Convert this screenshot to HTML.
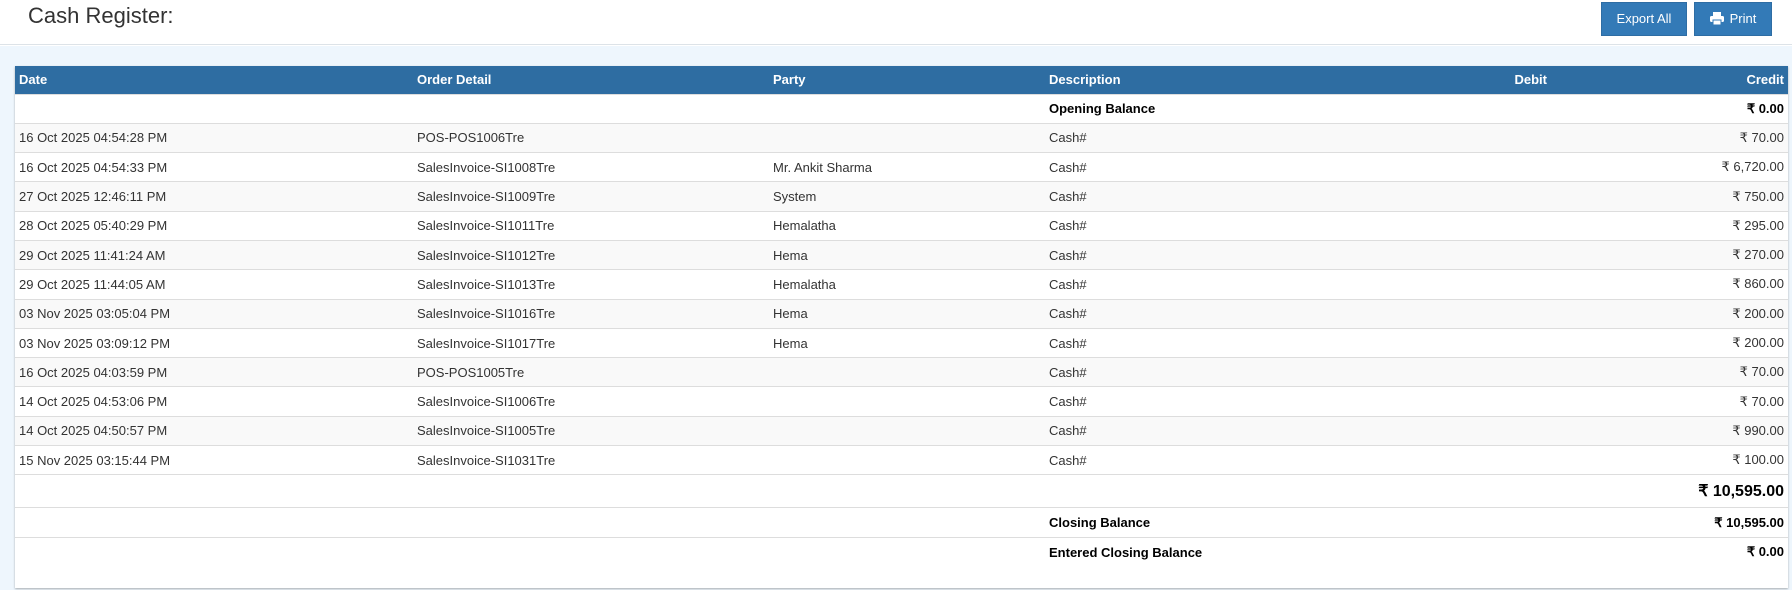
<!DOCTYPE html>
<html><head><meta charset="utf-8"><style>
*{box-sizing:border-box;margin:0;padding:0}
body{width:1792px;height:590px;background:#fff;font-family:"Liberation Sans",sans-serif;color:#333;position:relative;overflow:hidden}
.top{position:absolute;left:0;top:0;width:1792px;height:45px;background:#fff;border-bottom:1px solid #dde3e8}
.title{position:absolute;left:28px;top:2px;font-size:22px;color:#333;line-height:28px}
.btn{position:absolute;top:2px;height:34px;background:#337ab7;border:1px solid #2e6da4;color:#fff;font-size:13px;line-height:32px;text-align:center}
.bg{position:absolute;left:0;top:46px;width:1792px;height:544px;background:#eef6fd}
.card{position:absolute;left:15px;top:66px;width:1773px;height:522px;background:#fff;box-shadow:0 1px 2px rgba(0,0,0,.3)}
table{border-collapse:collapse;width:1773px;table-layout:fixed;font-size:13px}
th{background:#2e6da2;color:#fff;font-weight:bold;height:28px;text-align:left;padding:0 4px}
td{height:29.3px;padding:0 4px;border-top:1px solid #ddd;white-space:nowrap}
tr.g td{background:#f9f9f9}
.r{text-align:right}
.b{font-weight:bold;color:#000}
</style></head><body>
<div class="top"><div class="title">Cash Register:</div>
<div class="btn" style="left:1601px;width:86px">Export All</div>
<div class="btn" style="left:1694px;width:78px"><svg width="14" height="13" viewBox="0 0 14 13" style="vertical-align:-2px;margin-right:6px"><rect x="3" y="0" width="8" height="4" fill="#fff"/><rect x="0" y="4" width="14" height="6" rx="1.5" fill="#fff"/><rect x="3" y="8" width="8" height="5" fill="#fff" stroke="#337ab7" stroke-width="1"/></svg>Print</div>
</div>
<div class="bg"></div>
<div class="card">
<table>
<colgroup><col style="width:398px"><col style="width:356px"><col style="width:276px"><col style="width:254px"><col style="width:252px"><col style="width:237px"></colgroup>
<tr><th>Date</th><th>Order Detail</th><th>Party</th><th>Description</th><th class="r">Debit</th><th class="r">Credit</th></tr>
<tr><td></td><td></td><td></td><td class="b">Opening Balance</td><td></td><td class="r b">₹ 0.00</td></tr>
<tr class="g"><td>16 Oct 2025 04:54:28 PM</td><td>POS-POS1006Tre</td><td></td><td>Cash#</td><td></td><td class="r">₹ 70.00</td></tr>
<tr><td>16 Oct 2025 04:54:33 PM</td><td>SalesInvoice-SI1008Tre</td><td>Mr. Ankit Sharma</td><td>Cash#</td><td></td><td class="r">₹ 6,720.00</td></tr>
<tr class="g"><td>27 Oct 2025 12:46:11 PM</td><td>SalesInvoice-SI1009Tre</td><td>System</td><td>Cash#</td><td></td><td class="r">₹ 750.00</td></tr>
<tr><td>28 Oct 2025 05:40:29 PM</td><td>SalesInvoice-SI1011Tre</td><td>Hemalatha</td><td>Cash#</td><td></td><td class="r">₹ 295.00</td></tr>
<tr class="g"><td>29 Oct 2025 11:41:24 AM</td><td>SalesInvoice-SI1012Tre</td><td>Hema</td><td>Cash#</td><td></td><td class="r">₹ 270.00</td></tr>
<tr><td>29 Oct 2025 11:44:05 AM</td><td>SalesInvoice-SI1013Tre</td><td>Hemalatha</td><td>Cash#</td><td></td><td class="r">₹ 860.00</td></tr>
<tr class="g"><td>03 Nov 2025 03:05:04 PM</td><td>SalesInvoice-SI1016Tre</td><td>Hema</td><td>Cash#</td><td></td><td class="r">₹ 200.00</td></tr>
<tr><td>03 Nov 2025 03:09:12 PM</td><td>SalesInvoice-SI1017Tre</td><td>Hema</td><td>Cash#</td><td></td><td class="r">₹ 200.00</td></tr>
<tr class="g"><td>16 Oct 2025 04:03:59 PM</td><td>POS-POS1005Tre</td><td></td><td>Cash#</td><td></td><td class="r">₹ 70.00</td></tr>
<tr><td>14 Oct 2025 04:53:06 PM</td><td>SalesInvoice-SI1006Tre</td><td></td><td>Cash#</td><td></td><td class="r">₹ 70.00</td></tr>
<tr class="g"><td>14 Oct 2025 04:50:57 PM</td><td>SalesInvoice-SI1005Tre</td><td></td><td>Cash#</td><td></td><td class="r">₹ 990.00</td></tr>
<tr><td>15 Nov 2025 03:15:44 PM</td><td>SalesInvoice-SI1031Tre</td><td></td><td>Cash#</td><td></td><td class="r">₹ 100.00</td></tr>
<tr><td style="height:33px"></td><td></td><td></td><td></td><td></td><td class="r b" style="font-size:16px">₹ 10,595.00</td></tr>
<tr><td></td><td></td><td></td><td class="b">Closing Balance</td><td></td><td class="r b">₹ 10,595.00</td></tr>
<tr><td></td><td></td><td></td><td class="b">Entered Closing Balance</td><td></td><td class="r b">₹ 0.00</td></tr>
</table>
</div>
</body></html>
